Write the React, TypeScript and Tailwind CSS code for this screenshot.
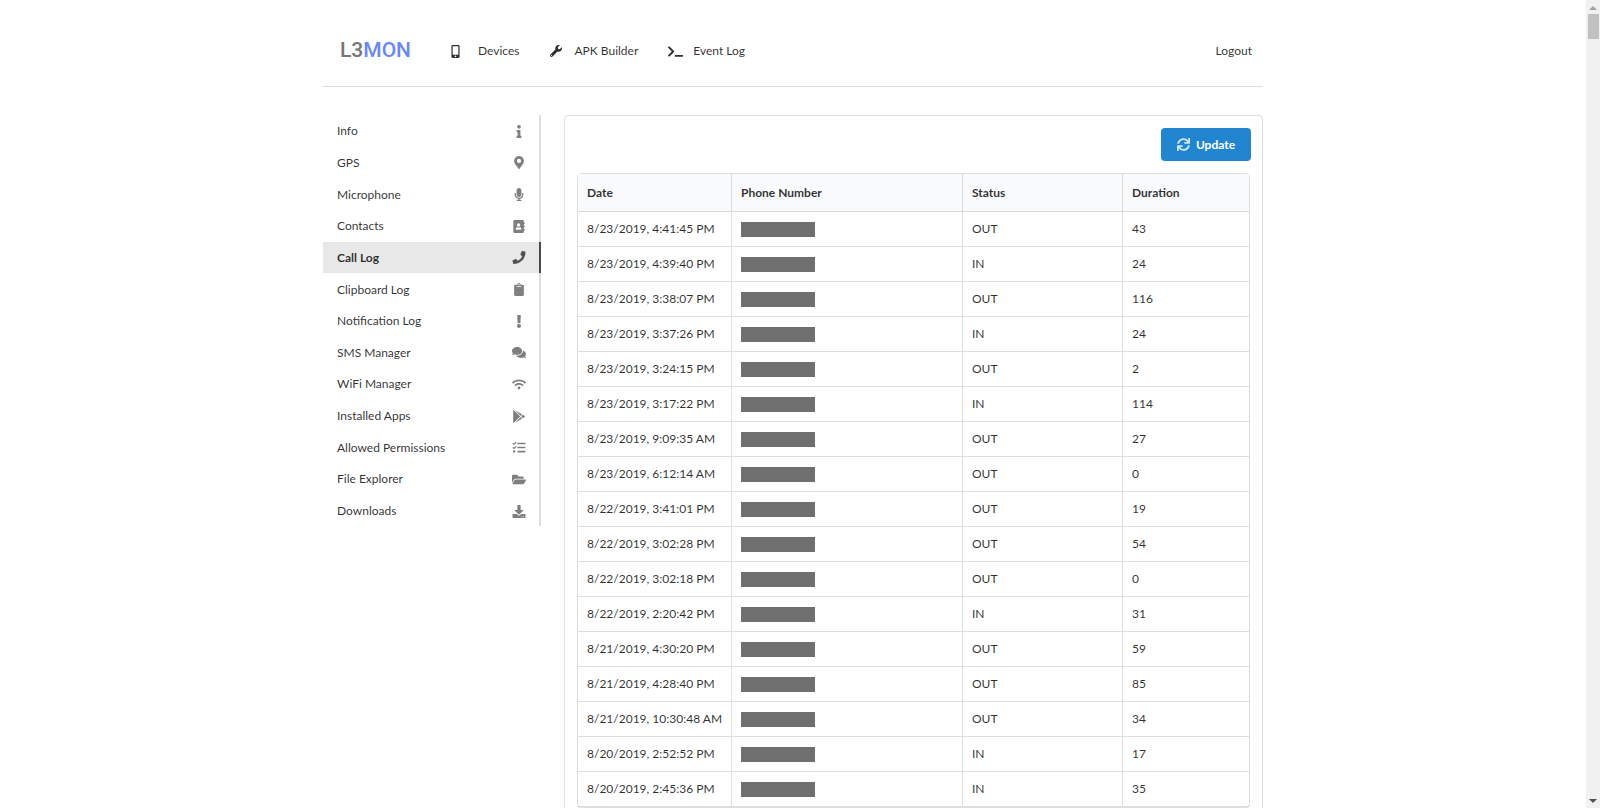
import {
  FaAddressBook, FaClipboard, FaComments, FaDownload, FaExclamation, FaFolderOpen, FaGooglePlay,
  FaInfo, FaMapMarkerAlt, FaMicrophone, FaMobileAlt, FaPhone, FaSync, FaTasks, FaTerminal, FaWifi, FaWrench,
} from 'react-icons/fa'

const MENU = [
  { name: 'Info', icon: FaInfo },
  { name: 'GPS', icon: FaMapMarkerAlt },
  { name: 'Microphone', icon: FaMicrophone },
  { name: 'Contacts', icon: FaAddressBook },
  { name: 'Call Log', icon: FaPhone, active: true },
  { name: 'Clipboard Log', icon: FaClipboard },
  { name: 'Notification Log', icon: FaExclamation },
  { name: 'SMS Manager', icon: FaComments },
  { name: 'WiFi Manager', icon: FaWifi },
  { name: 'Installed Apps', icon: FaGooglePlay },
  { name: 'Allowed Permissions', icon: FaTasks },
  { name: 'File Explorer', icon: FaFolderOpen },
  { name: 'Downloads', icon: FaDownload },
]

const CALLS = [
  ['8/23/2019, 4:41:45 PM', 'OUT', '43'],
  ['8/23/2019, 4:39:40 PM', 'IN', '24'],
  ['8/23/2019, 3:38:07 PM', 'OUT', '116'],
  ['8/23/2019, 3:37:26 PM', 'IN', '24'],
  ['8/23/2019, 3:24:15 PM', 'OUT', '2'],
  ['8/23/2019, 3:17:22 PM', 'IN', '114'],
  ['8/23/2019, 9:09:35 AM', 'OUT', '27'],
  ['8/23/2019, 6:12:14 AM', 'OUT', '0'],
  ['8/22/2019, 3:41:01 PM', 'OUT', '19'],
  ['8/22/2019, 3:02:28 PM', 'OUT', '54'],
  ['8/22/2019, 3:02:18 PM', 'OUT', '0'],
  ['8/22/2019, 2:20:42 PM', 'IN', '31'],
  ['8/21/2019, 4:30:20 PM', 'OUT', '59'],
  ['8/21/2019, 4:28:40 PM', 'OUT', '85'],
  ['8/21/2019, 10:30:48 AM', 'OUT', '34'],
  ['8/20/2019, 2:52:52 PM', 'IN', '17'],
  ['8/20/2019, 2:45:36 PM', 'IN', '35'],
]

function Scrollbar() {
  return (
    <div className="w-[14px] h-full shrink-0 bg-[#f1f1f1] flex flex-col items-center justify-between">
      <div className="flex flex-col items-center w-full">
        <div className="h-[14px] flex items-center justify-center">
          <div className="w-0 h-0 mt-[1px] border-x-[4px] border-x-transparent border-b-[4px] border-b-[#a3a3a3]" />
        </div>
        <div className="w-[11px] h-[25px] bg-[#c1c1c1]" />
      </div>
      <div className="h-[14px] flex items-center justify-center">
        <div className="w-0 h-0 border-x-[4px] border-x-transparent border-t-[4px] border-t-[#505050]" />
      </div>
    </div>
  )
}

export default function App() {
  return (
    <div className="h-[808px] flex overflow-hidden bg-white text-[12px] text-[#000000d0] font-['Lato',sans-serif]">
      <div className="flex-1 min-w-0">
        <div className="w-[940px] ml-[323px]">
          {/* Top menu */}
          <div className="h-[87px] pt-[16px] border-b border-[#22242626] flex items-center pl-[17px] pr-[11px]">
            <span className="w-[72px] text-[21px] font-medium font-['Roboto',sans-serif] text-[#767676]">
              L3<span className="text-[#6b87f5]">MON</span>
            </span>
            <a className="flex items-center ml-[37px]">
              <FaMobileAlt className="w-[13px] h-[13px] mr-[16px]" />
              Devices
            </a>
            <a className="flex items-center ml-[31px]">
              <FaWrench className="w-[12px] h-[12px] mr-[12px]" />
              APK Builder
            </a>
            <a className="flex items-center ml-[30px]">
              <FaTerminal className="w-[15px] h-[13px] mr-[10px]" />
              Event Log
            </a>
            <a className="ml-auto">Logout</a>
          </div>

          <div className="flex items-start mt-[28px]">
            {/* Side menu */}
            <div className="w-[218px] shrink-0 border-r-2 border-[#22242626]">
              {MENU.map((m) => (
                <a
                  key={m.name}
                  className={`h-[31.65px] pt-[1px] flex items-center justify-between pl-[14px] pr-[13px] ${
                    m.active ? 'bg-[#e8e8e8] font-bold -mr-[2px] border-r-2 border-[#4a4a4a] pr-[13px]' : ''
                  }`}
                >
                  {m.name}
                  <m.icon className={`w-[14px] h-[13px] ${m.active ? 'text-[#000000a6]' : 'text-[#00000080]'}`} />
                </a>
              ))}
            </div>

            {/* Content panel */}
            <div className="ml-[23px] w-[699px] border border-[#22242626] rounded-[4px] px-[12px] py-[12px]">
              <div className="flex justify-end">
                <button className="w-[90px] h-[33px] -mr-[1px] rounded-[4px] bg-[#2185d0] text-white font-bold flex items-center justify-center gap-[6px]">
                  <FaSync className="w-[13px] h-[13px] opacity-80" />
                  Update
                </button>
              </div>
              <table className="w-[673px] mt-[12px] table-fixed border-separate border-spacing-0 border border-[#22242626] rounded-[4px]">
                <thead>
                  <tr className="bg-[#f9fafb] h-[38px] text-left">
                    <th className="w-[153px] px-[9px] font-bold border-b border-[#22242626]">Date</th>
                    <th className="w-[231px] px-[9px] font-bold border-b border-l border-[#22242626]">Phone Number</th>
                    <th className="w-[160px] px-[9px] font-bold border-b border-l border-[#22242626]">Status</th>
                    <th className="px-[9px] font-bold border-b border-l border-[#22242626]">Duration</th>
                  </tr>
                </thead>
                <tbody>
                  {CALLS.map((c) => (
                    <tr key={c[0]} className="h-[35px]">
                      <td className="px-[9px] border-b border-[#22242626] whitespace-nowrap">{c[0]}</td>
                      <td className="px-[9px] border-b border-l border-[#22242626]">
                        <div className="w-[74px] h-[15px] bg-[#6f6f6f]" />
                      </td>
                      <td className="px-[9px] border-b border-l border-[#22242626]">{c[1]}</td>
                      <td className="px-[9px] border-b border-l border-[#22242626]">{c[2]}</td>
                    </tr>
                  ))}
                </tbody>
              </table>
            </div>
          </div>
        </div>
      </div>
      <Scrollbar />
    </div>
  )
}
